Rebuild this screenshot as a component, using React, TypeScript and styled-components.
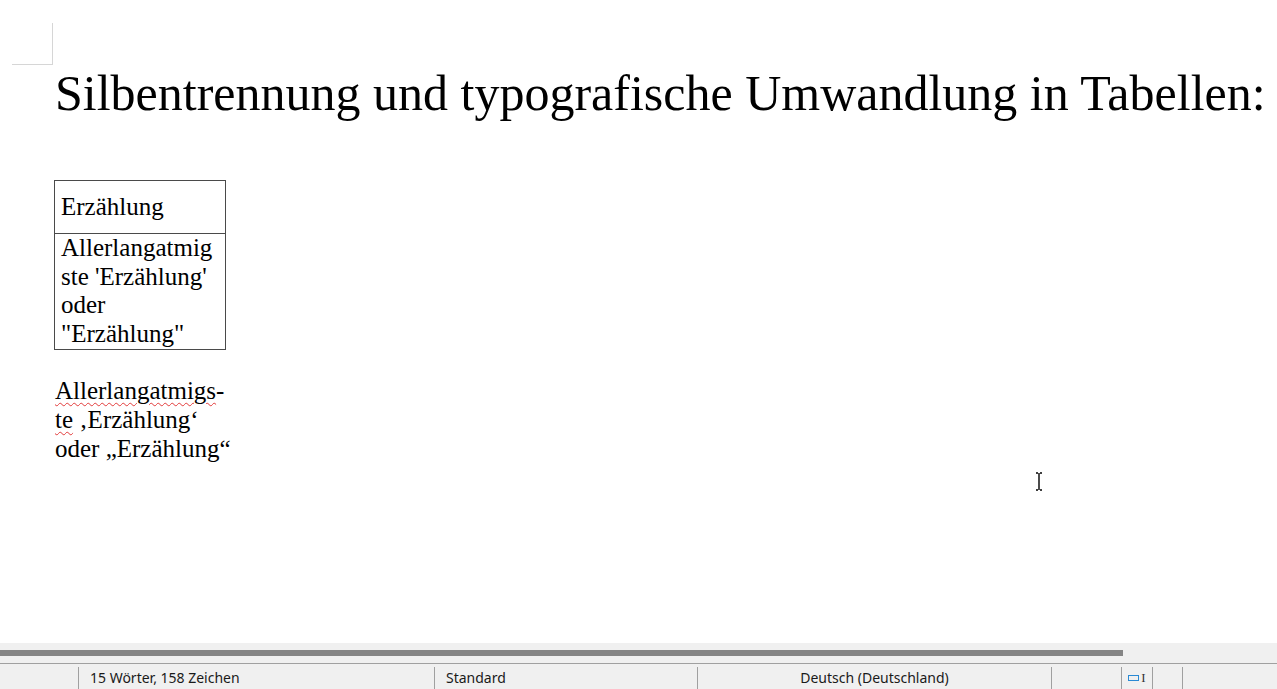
import styled, { createGlobalStyle } from "styled-components";

const GlobalStyle = createGlobalStyle`
  html, body {
    margin: 0;
    padding: 0;
    height: 100%;
    overflow: hidden;
  }
  #root {
    height: 100%;
  }
`;

const statusCells = [
  { width: 79, text: "", align: "left" },
  { width: 356, text: "15 Wörter, 158 Zeichen", align: "left" },
  { width: 263, text: "Standard", align: "left" },
  { width: 354, text: "Deutsch (Deutschland)", align: "center" },
  { width: 70, text: "", align: "left" },
];

export default function App() {
  return (
    <>
      <GlobalStyle />
      <SWindow>
        <SDocument>
          <SCornerMark />
          <STitle>Silbentrennung und typografische Umwandlung in Tabellen:</STitle>

          <STable>
            <tbody>
              <tr>
                <SHeadCell>Erzählung</SHeadCell>
              </tr>
              <tr>
                <SCell>
                  Allerlangatmig
                  <br />
                  ste 'Erzählung'
                  <br />
                  oder
                  <br />
                  "Erzählung"
                </SCell>
              </tr>
            </tbody>
          </STable>

          <SParagraph>
            <SMisspelled>Allerlangatmigs</SMisspelled>-
            <br />
            <SMisspelled>te</SMisspelled> ‚Erzählung‘
            <br />
            oder „Erzählung“
          </SParagraph>

          <SCursor>
            <svg width="8" height="19" viewBox="0 0 8 19">
              <path d="M1 1h2M5 1h2M4 1v17M1 18h2M5 18h2" stroke="#000" strokeWidth="1.4" fill="none" />
            </svg>
          </SCursor>
        </SDocument>

        <SBottom>
          <SScrollTrack>
            <SScrollThumb />
          </SScrollTrack>
          <SStatusBar>
            {statusCells.map((c, i) => (
              <SStatusCell key={i} $width={c.width} $align={c.align}>
                {c.text}
              </SStatusCell>
            ))}
            <SStatusCell $width={31} $align="center">
              <SInsertIcon>
                <svg width="11" height="6" viewBox="0 0 11 6">
                  <rect x="0.5" y="0.5" width="10" height="5" fill="none" stroke="#2a8ad4" strokeWidth="1" />
                </svg>
                <span>I</span>
              </SInsertIcon>
            </SStatusCell>
            <SStatusCell $width={30} $align="left" />
            <SStatusCell $width={94} $align="left" $last />
          </SStatusBar>
        </SBottom>
      </SWindow>
    </>
  );
}

const SWindow = styled.div`
  display: flex;
  flex-direction: column;
  height: 100%;
  background: #ffffff;
`;

const SDocument = styled.div`
  position: relative;
  flex: 1;
  padding-left: 55px;
  font-family: "Liberation Serif", "Times New Roman", serif;
  color: #000;
`;

const SCornerMark = styled.div`
  margin-top: 23px;
  margin-left: -43px;
  width: 40px;
  height: 41px;
  border-right: 1px solid #d6d6d6;
  border-bottom: 1px solid #d6d6d6;
`;

const STitle = styled.h1`
  margin: -2px 0 0 0;
  font-weight: normal;
  font-size: 50px;
  line-height: 60px;
  white-space: nowrap;
`;

const STable = styled.table`
  margin-top: 57px;
  margin-left: -1px;
  border-collapse: collapse;
  width: 172px;
  font-size: 25px;
`;

const SHeadCell = styled.td`
  border: 1px solid #4a4a4a;
  padding: 12px 5px 12px 6px;
  line-height: 28px;
  height: 28px;
`;

const SCell = styled.td`
  border: 1px solid #4a4a4a;
  padding: 0 5px 1px 6px;
  line-height: 28.5px;
`;

const SParagraph = styled.p`
  margin: 26px 0 0 0;
  font-size: 25px;
  line-height: 29px;
`;

const SMisspelled = styled.span`
  text-decoration: underline wavy #e23b3b;
  text-decoration-thickness: 1px;
  text-underline-offset: 3px;
`;

const SCursor = styled.div`
  position: absolute;
  left: 1035px;
  top: 472px;
`;

const SBottom = styled.div`
  background: #f0f0f0;
  font-family: "Noto Sans", "Segoe UI", sans-serif;
`;

const SScrollTrack = styled.div`
  padding: 7px 0 7px 0;
  border-bottom: 1px solid #a0a0a0;
`;

const SScrollThumb = styled.div`
  width: 1123px;
  height: 6px;
  background: #858585;
`;

const SStatusBar = styled.div`
  display: flex;
  height: 25px;
`;

const SStatusCell = styled.div<{ $width: number; $align: string; $last?: boolean }>`
  box-sizing: border-box;
  width: ${(p) => p.$width}px;
  flex: ${(p) => (p.$last ? "1" : "none")};
  display: flex;
  align-items: center;
  justify-content: ${(p) => (p.$align === "center" ? "center" : "flex-start")};
  padding: 0 0 1px ${(p) => (p.$align === "center" ? "0" : "11px")};
  margin-top: 3px;
  font-size: 14px;
  color: #1a1a1a;
  white-space: nowrap;
  border-right: ${(p) => (p.$last ? "none" : "1px solid #a0a0a0")};
  &:first-child {
    padding-left: 0;
  }
`;

const SInsertIcon = styled.div`
  display: flex;
  align-items: center;
  gap: 2px;
  font-size: 13px;
  color: #333;
  span {
    font-family: "Liberation Serif", serif;
  }
`;
